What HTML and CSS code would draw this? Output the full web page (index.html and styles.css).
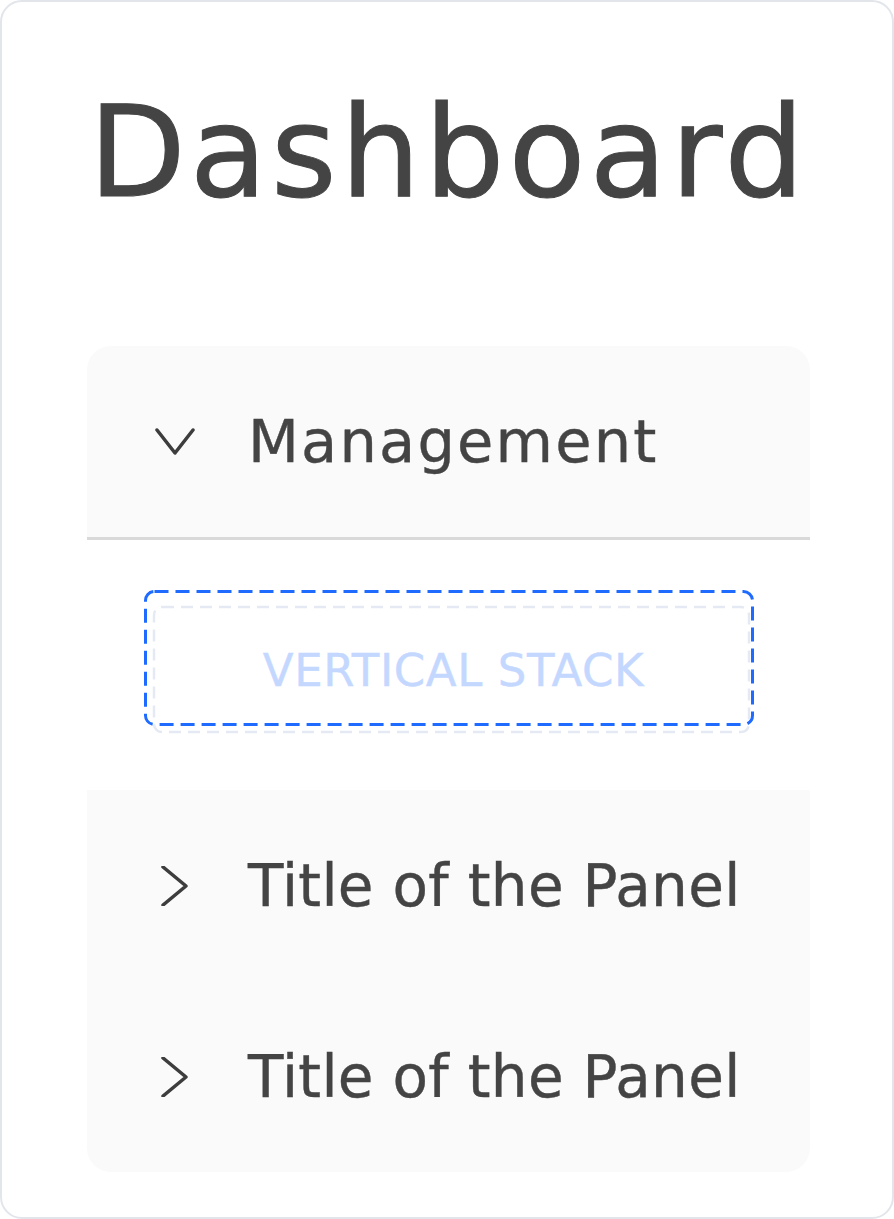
FILE: index.html
```html
<!DOCTYPE html>
<html>
<head>
<meta charset="utf-8">
<link rel="stylesheet" href="styles.css">
</head>
<body>
<div class="card">
  <h1 class="title">Dashboard</h1>
  <div class="accordion">
    <div class="panel-header expanded">
      <svg class="chev" viewBox="0 0 40 40"><path d="M2 8 L20 31 L38 8" /></svg>
      <span class="label">Management</span>
    </div>
    <div class="panel-content">
      <div class="stack-wrap">
        <div class="stack">
          <svg class="stack-border" width="597" height="127"><rect x="1" y="1" width="595" height="125" rx="8" ry="8" /></svg>
          <span class="stack-text">VERTICAL STACK</span>
        </div>
        <svg class="selection" width="610" height="136"><rect x="1.5" y="1.5" width="607" height="133" rx="9" ry="9" /></svg>
      </div>
    </div>
    <div class="panel-header">
      <svg class="chev" viewBox="0 0 40 40"><path d="M8 1 L31 20 L8 39" /></svg>
      <span class="label panel">Title of the Panel</span>
    </div>
    <div class="panel-header last">
      <svg class="chev" viewBox="0 0 40 40"><path d="M8 1 L31 20 L8 39" /></svg>
      <span class="label panel">Title of the Panel</span>
    </div>
  </div>
</div>
</body>
</html>
```

FILE: styles.css
```css
* { box-sizing: border-box; }
html, body { margin: 0; padding: 0; background: #ffffff; }
body {
  font-family: "DejaVu Sans", "Liberation Sans", sans-serif;
  color: #444444;
}
.card {
  width: 894px;
  height: 1219px;
  border: 2px solid #e2e5ea;
  border-radius: 22px;
  background: #ffffff;
  padding: 0 82px 0 85px;
}
.title {
  margin: 0;
  height: 344px;
  padding-top: 76px;
  font-size: 126px;
  line-height: 150px;
  font-weight: normal;
  text-align: center;
  letter-spacing: 4px;
  text-indent: 0;
  color: #444444;
  -webkit-text-stroke: 1px #444444;
}
.accordion {
  width: 723px;
  border-radius: 24px;
  overflow: hidden;
}
.panel-header {
  height: 191px;
  background: #fafafa;
  display: flex;
  align-items: center;
  padding-left: 68px;
}
.panel-header.expanded {
  height: 194px;
  border-bottom: 3px solid #d9d9d9;
}
.chev {
  width: 40px;
  height: 40px;
  flex: none;
  margin-right: 53px;
}
.chev path {
  fill: none;
  stroke: #3d3d3d;
  stroke-width: 3.5;
  stroke-linecap: round;
  stroke-linejoin: round;
}
.label {
  font-size: 59px;
  line-height: 80px;
  letter-spacing: 2.2px;
  color: #444444;
  -webkit-text-stroke: 0.4px #444444;
}
.label.panel {
  font-size: 58px;
  letter-spacing: 0.3px;
}
.panel-content {
  height: 250px;
  background: #ffffff;
  padding: 50px 57px 0 57px;
}
.stack-wrap {
  position: relative;
  padding: 16px 3px 0 9px;
}
.stack {
  position: relative;
  height: 127px;
  display: flex;
  align-items: center;
  justify-content: center;
}
.stack-border {
  position: absolute;
  left: 0;
  top: 0;
  overflow: visible;
}
.stack-border rect {
  fill: none;
  stroke: #e4e9f3;
  stroke-width: 2.5;
  stroke-dasharray: 12 7;
}
.stack-text {
  position: relative;
  font-size: 45px;
  letter-spacing: 0.6px;
  color: #c4d8ff;
  padding-top: 2px;
  padding-left: 4px;
  -webkit-text-stroke: 0.4px #c4d8ff;
}
.selection {
  position: absolute;
  left: 0;
  top: 0;
  overflow: visible;
}
.selection rect {
  fill: none;
  stroke: #1f6bff;
  stroke-width: 3;
  stroke-dasharray: 14 7;
}
```
